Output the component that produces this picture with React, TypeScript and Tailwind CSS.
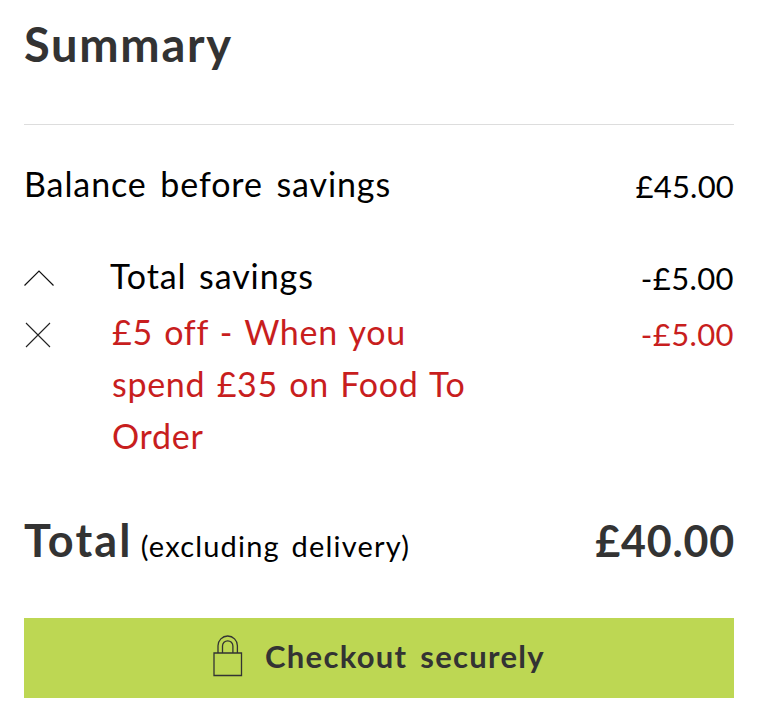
const rows = [
  { label: "Balance before savings", amount: "£45.00" },
  { label: "Total savings", amount: "-£5.00" },
];

const voucherLines = ["£5 off - When you", "spend £35 on Food To", "Order"];

function ChevronUp() {
  return (
    <svg width="30" height="18" viewBox="0 0 30 18" fill="none" stroke="#111" strokeWidth="1.2">
      <path d="M0.5 16.5 L15 2 L29.5 16.5" />
    </svg>
  );
}

function Cross() {
  return (
    <svg width="26" height="26" viewBox="0 0 26 26" fill="none" stroke="#222" strokeWidth="1.1">
      <path d="M1 1 L25 25 M25 1 L1 25" />
    </svg>
  );
}

function Padlock() {
  return (
    <svg width="30" height="42" viewBox="0 0 30 42" fill="none" stroke="#333" strokeWidth="1.3">
      <path d="M1 18 H28.5 V40.5 H1 Z" />
      <path d="M5 18 V10.7 a9.7 9.7 0 0 1 19.4 0 V18" />
      <path d="M9.5 18 V11 a5.2 5.2 0 0 1 10.4 0 V18" />
    </svg>
  );
}

export default function App() {
  return (
    <div className="h-[716px] w-[766px] overflow-hidden bg-white pr-8 pl-6 font-['Lato',sans-serif] text-black">
      <h1 className="flex h-[92px] items-center pb-[3px] text-[47px] font-bold tracking-[1.7px] text-[#333]">
        Summary
      </h1>
      <hr className="mt-8 border-t border-[#ddd]" />

      <div className="flex h-[120px] items-center justify-between">
        <span className="pb-[3px] text-[34px] tracking-[0.9px] [word-spacing:4px]">{rows[0].label}</span>
        <span className="pt-0.5 text-[31px] tracking-[0.2px]">{rows[0].amount}</span>
      </div>

      <div className="flex h-[61px] items-center">
        <div className="w-[86px] pt-[5px]">
          <ChevronUp />
        </div>
        <span className="flex-1 text-[34px] tracking-[0.9px] [word-spacing:3px]">{rows[1].label}</span>
        <span className="pt-[5px] text-[31px] tracking-[0.4px]">{rows[1].amount}</span>
      </div>

      <div className="flex text-[34px] leading-[52px] text-[#c81e1e]">
        <div className="w-[88px] pt-4 pl-px">
          <Cross />
        </div>
        <div className="flex-1 tracking-[0.7px] [word-spacing:2px]">
          {voucherLines.map((line) => (
            <p key={line}>{line}</p>
          ))}
        </div>
        <span className="pt-0.5 text-[31px] tracking-[0.4px]">-£5.00</span>
      </div>

      <div className="mt-[45px] flex h-[65px] items-baseline text-[#333]">
        <span className="text-[45px] font-bold tracking-[2.2px]">Total</span>
        <span className="ml-2 flex-1 text-[29px] tracking-[1.2px] text-black [word-spacing:3px]">
          (excluding delivery)
        </span>
        <span className="-mr-px text-[43px] font-bold tracking-[0.8px]">£40.00</span>
      </div>

      <button className="mt-[46px] flex h-20 w-full items-center justify-center bg-[#bdd753] text-[31px] font-bold text-[#333]">
        <span className="pb-1">
          <Padlock />
        </span>
        <span className="ml-[22px] pb-[3px] tracking-[1.3px] [word-spacing:4px]">Checkout securely</span>
      </button>
    </div>
  );
}
